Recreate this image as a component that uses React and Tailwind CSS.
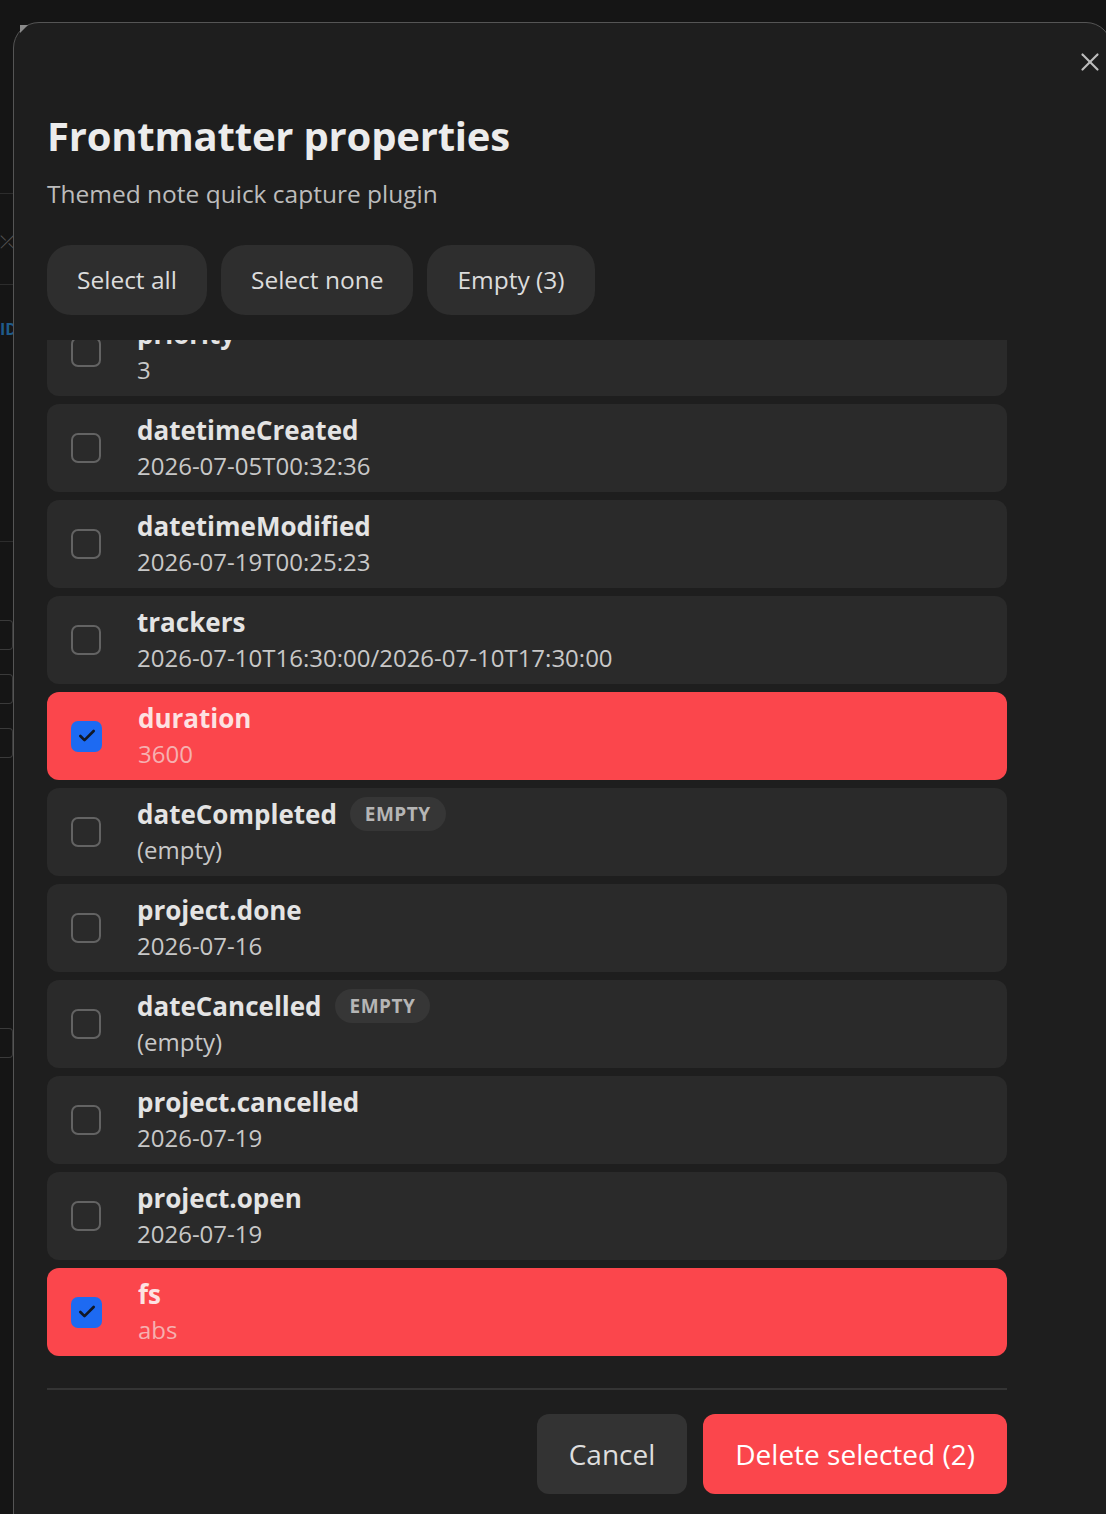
import { X, Check } from 'lucide-react';

const FONT = { fontFamily: '"Open Sans", Lato, "Liberation Sans", sans-serif' };

const properties = [
  { key: 'priority', value: '3' },
  { key: 'datetimeCreated', value: '2026-07-05T00:32:36' },
  { key: 'datetimeModified', value: '2026-07-19T00:25:23' },
  { key: 'trackers', value: '2026-07-10T16:30:00/2026-07-10T17:30:00' },
  { key: 'duration', value: '3600', selected: true },
  { key: 'dateCompleted', value: '(empty)', empty: true },
  { key: 'project.done', value: '2026-07-16' },
  { key: 'dateCancelled', value: '(empty)', empty: true },
  { key: 'project.cancelled', value: '2026-07-19' },
  { key: 'project.open', value: '2026-07-19' },
  { key: 'fs', value: 'abs', selected: true },
];

function PropertyRow({ prop }) {
  const on = prop.selected;
  return (
    <div
      className={`flex h-[88px] shrink-0 items-center rounded-xl pl-6 ${
        on ? 'bg-[#fb464c]' : 'bg-[#2a2a2a]'
      }`}
    >
      {on ? (
        <div className="flex h-[31px] w-[31px] items-center justify-center rounded-[7px] bg-[#1d6af2]">
          <Check className="h-5 w-5 text-[#111827]" strokeWidth={3.2} />
        </div>
      ) : (
        <div className="h-[30px] w-[30px] rounded-[7px] border-2 border-[#636363]" />
      )}
      <div className="ml-9 flex flex-col">
        <div className="flex items-center gap-[13px]">
          <span
            className={`text-[26px] font-bold leading-[36px] ${
              on ? 'text-[#fde2e2]' : 'text-[#e4e4e4]'
            }`}
          >
            {prop.key}
          </span>
          {prop.empty && (
            <span className="rounded-full bg-[#363636] px-[15px] py-[4px] text-[19px] font-bold leading-[26px] tracking-wide text-[#b5b5b5]">
              EMPTY
            </span>
          )}
        </div>
        <span
          className={`text-[24px] leading-[36px] ${
            on ? 'text-[#f6b0b0]' : 'text-[#c8c8c8]'
          }`}
        >
          {prop.value}
        </span>
      </div>
    </div>
  );
}

export default function App() {
  return (
    <div className="relative flex h-[1514px] w-[1106px] overflow-hidden bg-[#151515]" style={FONT}>
      {/* Sidebar peeking out behind the modal */}
      <div className="flex w-[13px] shrink-0 flex-col pt-[193px]">
        <div className="h-px bg-[#2c2c2c]" />
        <div className="mt-[38px] text-[18px] leading-[18px] text-[#555]">⤫</div>
        <div className="mt-[34px] h-px bg-[#2c2c2c]" />
        <div className="mt-[34px] text-[16px] font-bold leading-[20px] text-[#1f5b8a]">ID</div>
        <div className="mt-[202px] h-px bg-[#2c2c2c]" />
        <div className="mt-[78px] h-[30px] rounded-r border border-l-0 border-[#3a3a3a]" />
        <div className="mt-[24px] h-[30px] rounded-r border border-l-0 border-[#3a3a3a]" />
        <div className="mt-[24px] h-[30px] rounded-r border border-l-0 border-[#3a3a3a]" />
        <div className="mt-[270px] h-[30px] rounded-r border border-l-0 border-[#3a3a3a]" />
      </div>

      {/* Modal */}
      <div className="relative mt-[22px] flex h-[1520px] w-[1099px] shrink-0 flex-col rounded-t-[26px] border border-[#555] bg-[#1e1e1e] pl-[33px] pt-[88px]">
        <div className="absolute left-[6px] top-[2px] h-[8px] w-[8px] bg-[#8a8a8a] [clip-path:polygon(0_0,100%_0,0_100%)]" />
        <button className="absolute right-[6px] top-[24px] text-[#bdbdbd]">
          <X className="h-[30px] w-[30px]" strokeWidth={1.75} />
        </button>

        <h1 className="text-[40px] font-bold leading-[50px] tracking-[-0.2px] text-[#ececec]">
          Frontmatter properties
        </h1>
        <p className="mt-[17px] text-[24.5px] leading-[32px] text-[#bcbcbc]">
          Themed note quick capture plugin
        </p>

        <div className="mt-[35px] flex gap-[14px]">
          {['Select all', 'Select none', 'Empty (3)'].map((label) => (
            <button
              key={label}
              className="h-[70px] rounded-[24px] bg-[#2e2e2e] px-[30px] text-[24.5px] text-[#dcdcdc]"
            >
              {label}
            </button>
          ))}
        </div>

        {/* Scrolled property list */}
        <div className="mt-[25px] h-[1024px] w-[960px] overflow-hidden">
          <div className="-mt-[32px] flex flex-col gap-2">
            {properties.map((p) => (
              <PropertyRow key={p.key} prop={p} />
            ))}
          </div>
        </div>

        <div className="mt-[24px] h-[2px] w-[960px] bg-[#343434]" />

        <div className="mt-[24px] flex w-[960px] justify-end gap-4">
          <button className="h-[80px] rounded-xl bg-[#333] px-[32px] text-[28px] text-[#dedede]">
            Cancel
          </button>
          <button className="h-[80px] rounded-xl bg-[#fb464c] px-[32px] text-[28px] text-white">
            Delete selected (2)
          </button>
        </div>
      </div>
    </div>
  );
}
